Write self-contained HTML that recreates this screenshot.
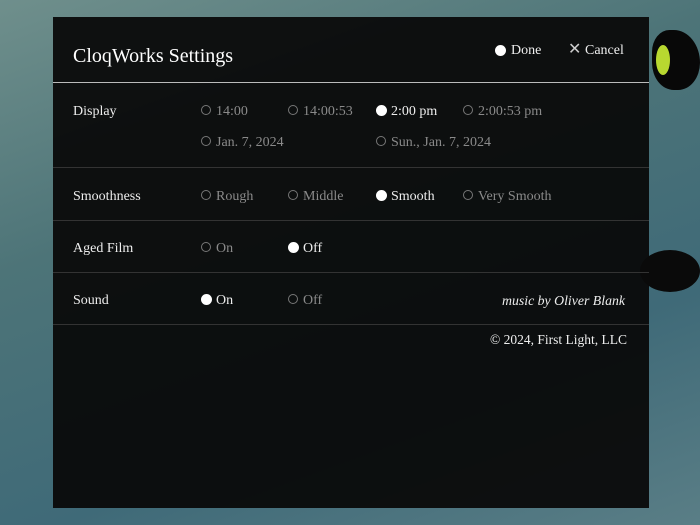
<!DOCTYPE html>
<html><head><style>
html,body{margin:0;width:700px;height:525px;overflow:hidden;background:linear-gradient(160deg,#6f8f8c 0%,#4d7478 35%,#3f6a78 70%,#5a7e86 100%);font-family:"Liberation Serif",serif;}
.panel{position:absolute;left:53px;top:17px;width:596px;height:491px;background:rgba(10,10,10,0.95);}
.t{position:absolute;color:#eee;font-size:14px;white-space:nowrap;line-height:16px}
.d{color:#8a8a8a}
.r{position:absolute;width:8px;height:8px;border:1px solid #777;border-radius:50%}
.f{background:#fff;border-color:#fff;width:9px;height:9px}
.hr{position:absolute;left:53px;width:596px;height:1px;background:#333}
</style></head><body>
<div class="panel"></div>
<div style="position:absolute;left:652px;top:30px;width:48px;height:60px;background:#080808;border-radius:40% 60% 50% 50%"></div>
<div style="position:absolute;left:656px;top:45px;width:14px;height:30px;background:#b8d830;border-radius:50%"></div>
<div style="position:absolute;left:640px;top:250px;width:60px;height:42px;background:#0a0a0a;border-radius:50%"></div>
<div class="t" style="left:73px;top:44px;font-size:20px;line-height:24px;color:#fff">CloqWorks Settings</div>
<div class="r f" style="left:495px;top:45px"></div><div class="t" style="left:511px;top:43px">Done</div>
<div class="t" style="left:568px;top:42px;font-size:16px;color:#ccc">✕</div><div class="t" style="left:585px;top:43px">Cancel</div>
<div class="hr" style="top:82px;background:#bbb"></div>
<div class="t" style="left:73px;top:104px">Display</div>
<div class="r" style="left:201px;top:105px"></div><div class="t d" style="left:216px;top:104px">14:00</div>
<div class="r" style="left:288px;top:105px"></div><div class="t d" style="left:303px;top:104px">14:00:53</div>
<div class="r f" style="left:376px;top:105px"></div><div class="t" style="left:391px;top:104px">2:00 pm</div>
<div class="r" style="left:463px;top:105px"></div><div class="t d" style="left:478px;top:104px">2:00:53 pm</div>
<div class="r" style="left:201px;top:136px"></div><div class="t d" style="left:216px;top:135px">Jan. 7, 2024</div>
<div class="r" style="left:376px;top:136px"></div><div class="t d" style="left:391px;top:135px">Sun., Jan. 7, 2024</div>
<div class="hr" style="top:167px"></div>
<div class="t" style="left:73px;top:189px">Smoothness</div>
<div class="r" style="left:201px;top:190px"></div><div class="t d" style="left:216px;top:189px">Rough</div>
<div class="r" style="left:288px;top:190px"></div><div class="t d" style="left:303px;top:189px">Middle</div>
<div class="r f" style="left:376px;top:190px"></div><div class="t" style="left:391px;top:189px">Smooth</div>
<div class="r" style="left:463px;top:190px"></div><div class="t d" style="left:478px;top:189px">Very Smooth</div>
<div class="hr" style="top:220px"></div>
<div class="t" style="left:73px;top:241px">Aged Film</div>
<div class="r" style="left:201px;top:242px"></div><div class="t d" style="left:216px;top:241px">On</div>
<div class="r f" style="left:288px;top:242px"></div><div class="t" style="left:303px;top:241px">Off</div>
<div class="hr" style="top:272px"></div>
<div class="t" style="left:73px;top:293px">Sound</div>
<div class="r f" style="left:201px;top:294px"></div><div class="t" style="left:216px;top:293px">On</div>
<div class="r" style="left:288px;top:294px"></div><div class="t d" style="left:303px;top:293px">Off</div>
<div class="t" style="left:502px;top:293px;font-style:italic;font-size:13.8px">music by Oliver Blank</div>
<div class="hr" style="top:324px"></div>
<div class="t" style="left:490px;top:332px;font-size:13.5px">© 2024, First Light, LLC</div>
</body></html>
